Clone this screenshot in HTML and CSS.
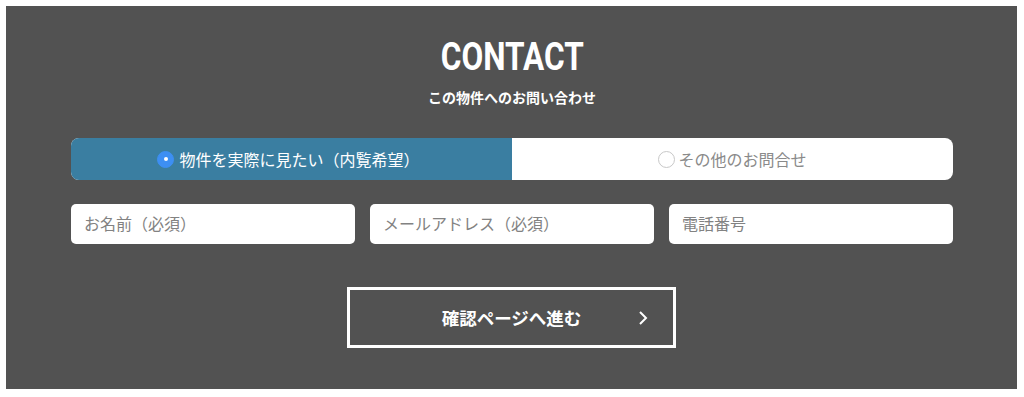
FILE: index.html
```html
<!DOCTYPE html>
<html lang="ja">
<head>
<meta charset="utf-8">
<title>CONTACT</title>
<link rel="stylesheet" href="styles.css">
</head>
<body>
<section class="contact">
  <h2 class="contact-title"><span class="contact-title-text">CONTACT</span></h2>
  <p class="contact-sub">この物件へのお問い合わせ</p>
  <div class="tabs">
    <div class="tab tab-active"><span class="radio radio-on"></span><span class="tab-label">物件を実際に見たい（内覧希望）</span></div>
    <div class="tab"><span class="radio"></span><span class="tab-label">その他のお問合せ</span></div>
  </div>
  <div class="fields">
    <input class="field" type="text" placeholder="お名前（必須）">
    <input class="field" type="text" placeholder="メールアドレス（必須）">
    <input class="field" type="text" placeholder="電話番号">
  </div>
  <div class="actions">
    <button class="submit" type="button">確認ページへ進む<svg class="chev" width="10" height="16" viewBox="0 0 10 16"><path d="M2 2 L8 8 L2 14" fill="none" stroke="#fff" stroke-width="2"/></svg></button>
  </div>
</section>
</body>
</html>
```
FILE: styles.css
```css
html, body {
  margin: 0;
  padding: 0;
  background: #ffffff;
}
body {
  padding: 6px 7px 0 6px;
  font-family: "Noto Sans CJK JP", "Noto Sans", sans-serif;
}
.contact {
  background: #525252;
  height: 383px;
  box-sizing: border-box;
  padding: 32px 64px 0 65px;
  color: #fff;
}
.contact-title {
  margin: 0;
  text-align: center;
  font-family: Roboto, "Liberation Sans", sans-serif;
  font-weight: 700;
  font-size: 39px;
  line-height: 39px;
  height: 39px;
}
.contact-title-text {
  display: inline-block;
  transform: scaleX(0.81);
}
.contact-sub {
  margin: 10px 0 0;
  text-align: center;
  font-size: 14px;
  font-weight: 700;
  line-height: 20px;
}
.tabs {
  margin-top: 31px;
  display: flex;
  height: 42px;
  border-radius: 8px;
  overflow: hidden;
  background: #fff;
}
.tab {
  flex: 1;
  display: flex;
  align-items: center;
  justify-content: center;
  font-size: 16px;
  color: #8a8a8a;
}
.tab-active {
  background: #3a7ea1;
  color: #fff;
}
.tab-label {
  line-height: 20px;
}
.radio {
  width: 15px;
  height: 15px;
  border-radius: 50%;
  border: 1px solid #c8c8c8;
  background: #fff;
  margin-right: 3px;
  box-sizing: content-box;
  position: relative;
}
.radio-on {
  background: #3d8ff3;
  border-color: #3d8ff3;
  margin-right: 5px;
  margin-left: -6px;
}
.radio-on::after {
  content: "";
  position: absolute;
  left: 5.5px;
  top: 5.5px;
  width: 4px;
  height: 4px;
  border-radius: 50%;
  background: #fff;
}
.fields {
  margin-top: 24px;
  display: grid;
  grid-template-columns: repeat(3, 1fr);
  gap: 15px;
}
.field {
  height: 40px;
  box-sizing: border-box;
  border: none;
  border-radius: 5px;
  background: #fff;
  padding: 0 13px 3px;
  font-family: "Noto Sans CJK JP", "Noto Sans", sans-serif;
  font-size: 16px;
  color: #333;
  outline: none;
}
.field::placeholder {
  color: #828282;
}
.actions {
  margin-top: 43px;
  display: flex;
  justify-content: center;
}
.submit {
  position: relative;
  width: 329px;
  height: 61px;
  border: 3px solid #fff;
  background: transparent;
  color: #fff;
  font-family: "Noto Sans CJK JP", "Noto Sans", sans-serif;
  font-size: 17.5px;
  font-weight: 700;
  padding: 0;
  margin-left: -1px;
}
.chev {
  position: absolute;
  right: 25px;
  top: 50%;
  margin-top: -8px;
}
```
